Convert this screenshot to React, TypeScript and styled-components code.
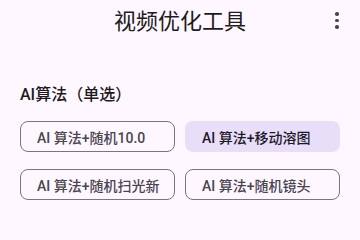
import React from "react";
import styled, { createGlobalStyle } from "styled-components";

const GlobalStyle = createGlobalStyle`
  html, body {
    margin: 0;
    padding: 0;
    background: #fef7ff;
  }
  body {
    font-family: Roboto, "Noto Sans CJK SC", sans-serif;
    color: #1d1b20;
  }
`;

const options = ["AI 算法+随机10.0", "AI 算法+移动溶图", "AI 算法+随机扫光新", "AI 算法+随机镜头"];
const selected = 1;

export default () => {
  return (
    <>
      <GlobalStyle />
      <Page>
        <TopBar>
          <Title>视频优化工具</Title>
          <MenuButton aria-label="more">
            <Dot />
            <Dot />
            <Dot />
          </MenuButton>
        </TopBar>
        <Section>
          <SectionLabel>AI算法（单选）</SectionLabel>
          <ChipGrid>
            {options.map((label, index) => (
              <Chip key={label} $selected={index === selected}>
                {label}
              </Chip>
            ))}
          </ChipGrid>
        </Section>
      </Page>
    </>
  );
};

const Page = styled.div`
  width: 360px;
  height: 215px;
  overflow: hidden;
  background: #fef7ff;
`;

const TopBar = styled.div`
  position: relative;
  height: 44px;
  display: flex;
  align-items: center;
  justify-content: center;
`;

const Title = styled.div`
  font-size: 22px;
  line-height: 28px;
  color: #1d1b20;
  margin-top: -1px;
`;

const MenuButton = styled.div`
  position: absolute;
  right: 20px;
  top: 12px;
  width: 6px;
  display: flex;
  flex-direction: column;
  align-items: center;
  gap: 3px;
`;

const Dot = styled.span`
  width: 3.5px;
  height: 3.5px;
  border-radius: 50%;
  background: #49454f;
`;

const Section = styled.div`
  padding: 40px 20px 0 20px;
`;

const SectionLabel = styled.div`
  font-size: 16px;
  line-height: 22px;
  font-weight: 500;
  color: #1d1b20;
`;

const ChipGrid = styled.div`
  margin-top: 15px;
  display: grid;
  grid-template-columns: 155px 155px;
  column-gap: 10px;
  row-gap: 17px;
`;

const Chip = styled.div<{ $selected: boolean }>`
  box-sizing: border-box;
  height: 31px;
  display: flex;
  align-items: center;
  padding-left: 16px;
  border-radius: 8px;
  font-size: 14px;
  font-weight: 500;
  color: ${(p) => (p.$selected ? "#1d192b" : "#49454f")};
  border: 1px solid ${(p) => (p.$selected ? "transparent" : "#79747e")};
  background: ${(p) => (p.$selected ? "#e8def8" : "transparent")};
`;
